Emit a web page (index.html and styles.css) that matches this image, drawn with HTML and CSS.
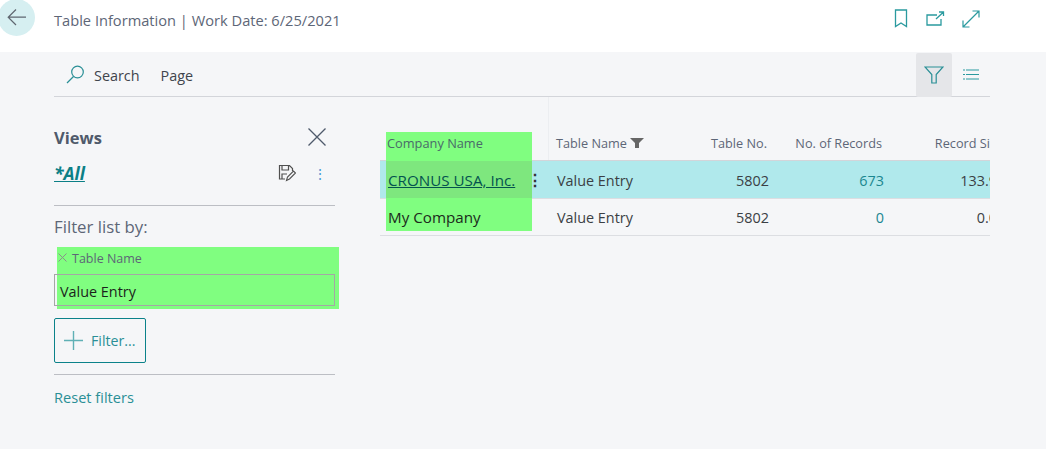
FILE: index.html
```html
<!DOCTYPE html>
<html lang="en">
<head>
<meta charset="utf-8">
<title>Table Information</title>
<link rel="stylesheet" href="styles.css">
</head>
<body>
<header class="topbar">
  <button class="back" aria-label="Back">
    <svg width="20" height="20" viewBox="0 0 20 20"><path d="M9 1.500 1.200 9.200 9 17M1.200 9.200H19" fill="none" stroke="#5f6770" stroke-width="1.200"/></svg>
  </button>
  <div class="title">Table Information | Work Date: 6/25/2021</div>
  <div class="top-icons">
    <svg width="14" height="19" viewBox="0 0 14 19"><path d="M1.500 1h11v16.500l-5.500-3.500-5.500 3.500z" fill="none" stroke="#2a9a9f" stroke-width="1.300"/></svg>
    <svg width="20" height="15" viewBox="0 0 20 15"><path d="M12 4H2v10h14V8M11 8l7-6.500M14 1h4.500v4" fill="none" stroke="#2a9a9f" stroke-width="1.300"/></svg>
    <svg width="18" height="18" viewBox="0 0 18 18"><path d="M1 17 17 1M10.500 1H17v6.500M1 10.500V17h6.500" fill="none" stroke="#2a9a9f" stroke-width="1.200"/></svg>
  </div>
</header>
<main class="page">
  <div class="toolbar">
    <svg class="search-icon" width="19" height="19" viewBox="0 0 19 19"><circle cx="11.500" cy="7" r="5.800" fill="none" stroke="#2a8f96" stroke-width="1.200"/><path d="M7.500 11.500 1 18" stroke="#2a8f96" stroke-width="1.300"/></svg>
    <span class="tool-label">Search</span>
    <span class="tool-label page-label">Page</span>
    <div class="tool-right">
      <span class="filter-toggle">
        <svg width="20" height="18" viewBox="0 0 20 18"><path d="M1 1h18l-6.800 7.500V17H7.800V8.500z" fill="none" stroke="#2a8f96" stroke-width="1.200"/></svg>
      </span>
      <svg class="list-icon" width="16" height="11" viewBox="0 0 16 11"><path d="M0 1h2M3 1h13M0 5.500h2M3 5.500h13M0 10h2M3 10h13" stroke="#2a9a9f" stroke-width="1.200"/></svg>
    </div>
  </div>
  <div class="content">
    <aside class="panel">
      <div class="views-row">
        <span class="views">Views</span>
        <svg width="20" height="20" viewBox="0 0 20 20"><path d="M1.500 1.500 18.500 18.500M18.500 1.500 1.500 18.500" stroke="#4f5a6b" stroke-width="1.300"/></svg>
      </div>
      <div class="all-row">
        <a class="all">*All</a>
        <svg class="save-icon" width="18" height="18" viewBox="0 0 18 18"><path d="M7 15H1.500V1.500h10l3 3V7M4 1.500V6h6.500V1.500M4 15v-5h5" fill="none" stroke="#505050" stroke-width="1.200"/><path d="M8.500 16.500 9.500 13l6-6 2 2-6 6z" fill="none" stroke="#505050" stroke-width="1.100"/></svg>
        <span class="dots">⋮</span>
      </div>
      <div class="filter-by">Filter list by:</div>
      <div class="filter-field">
        <div class="mark mark-filter"></div>
        <div class="field-label">
          <svg class="field-x" width="9" height="9" viewBox="0 0 9 9"><path d="M.5.500l8 8M8.500.500l-8 8" stroke="#8a8f8a" stroke-width="1"/></svg>
          <span>Table Name</span>
        </div>
        <div class="field-input">Value Entry</div>
      </div>
      <button class="add-filter">
        <svg width="19" height="19" viewBox="0 0 19 19"><path d="M9.500 0v19M0 9.500h19" stroke="#5fb0b5" stroke-width="1.400"/></svg>
        <span>Filter...</span>
      </button>
      <a class="reset">Reset filters</a>
    </aside>
    <section class="grid-wrap">
      <div class="grid">
        <div class="mark mark-column"><div class="mark-band"></div></div>
        <div class="row head">
          <div class="cell first">Company Name</div>
          <div class="cell name-head">Table Name
            <svg width="14" height="10" viewBox="0 0 14 10"><path d="M0 0h14L9 5v5H5V5z" fill="#666"/></svg>
          </div>
          <div class="cell num">Table No.</div>
          <div class="cell num">No. of Records</div>
          <div class="cell num">Record Size</div>
        </div>
        <div class="row selected">
          <div class="cell first"><a class="company-link">CRONUS USA, Inc.</a><span class="row-menu">⋮</span></div>
          <div class="cell">Value Entry</div>
          <div class="cell num">5802</div>
          <div class="cell num link">673</div>
          <div class="cell num size">133.9</div>
        </div>
        <div class="row">
          <div class="cell first">My Company</div>
          <div class="cell">Value Entry</div>
          <div class="cell num">5802</div>
          <div class="cell num link">0</div>
          <div class="cell num size">0.0</div>
        </div>
      </div>
    </section>
  </div>
</main>
</body>
</html>
```
FILE: styles.css
```css
* { box-sizing: border-box; }
html, body { margin: 0; height: 100%; }
body {
  width: 1046px;
  height: 449px;
  overflow: hidden;
  background: #f5f6f8;
  font-family: "Open Sans", "Noto Sans", sans-serif;
  font-size: 14.400px;
  color: #3b3f44;
}
.topbar {
  height: 52px;
  background: #fff;
  display: flex;
  align-items: center;
  position: relative;
}
.back {
  position: absolute;
  left: -2px;
  top: -1px;
  width: 37px;
  height: 37px;
  border: 0;
  border-radius: 50%;
  background: #d6eff1;
  padding: 0;
  display: flex;
  align-items: center;
  justify-content: center;
}
.title {
  margin: -13px 0 0 54px;
  color: #5d6677;
  font-size: 14.650px;
}
.top-icons {
  margin-left: auto;
  margin-right: 66px;
  margin-top: -15px;
  display: flex;
  align-items: center;
  gap: 17px;
}
.page { padding: 0 56px 0 54px; }
.toolbar {
  height: 45px;
  border-bottom: 1px solid #d3d5da;
  display: flex;
  align-items: center;
  padding-left: 12px;
}
.search-icon { margin-right: 9px; }
.tool-label { color: #3f444c; font-size: 14.400px; position: relative; top: 1px; }
.page-label { margin-left: 21px; }
.tool-right { margin-left: auto; display: flex; align-items: center; align-self: stretch; }
.filter-toggle {
  width: 36px;
  height: 44px;
  margin-top: 1px;
  background: #e5e6e9;
  border-radius: 2px;
  display: flex;
  align-items: center;
  justify-content: center;
}
.list-icon { margin: 1px 11px 0 11px; }
.content { display: flex; align-items: flex-start; }
.panel { width: 281px; flex: none; padding-top: 29px; }
.views-row { display: flex; justify-content: space-between; align-items: center; height: 22px; padding-right: 8px; margin-bottom: 1px; }
.views { font-weight: 700; font-size: 16.500px; color: #4f5a6b; }
.all-row {
  display: flex;
  align-items: center;
  height: 57px;
  padding-top: 6px;
  padding-bottom: 14px;
  border-bottom: 1px solid #bcbec4;
}
.all { font-weight: 700; font-style: italic; font-size: 17.500px; color: #0b7f86; text-decoration: underline; }
.save-icon { margin-left: auto; }
.dots { color: #4a9ad4; font-size: 14px; width: 14px; margin: 0 8px 0 17px; text-align: center; }
.filter-by { font-size: 16.800px; color: #5d6677; margin-top: 9px; height: 30px; }
.filter-field { position: relative; margin-top: -1px; }
.field-label { height: 30px; padding: 0 0 2px 4px; font-size: 12.500px; color: #5d6677; display: flex; align-items: center; position: relative; }
.field-x { margin-right: 5px; margin-top: -1px; }
.field-input {
  height: 32px;
  border: 1px solid #a5a7a5;
  padding-left: 5px;
  line-height: 33px;
  font-size: 14.400px;
  color: #1c1f1c;
  position: relative;
}
.mark { position: absolute; background: #80fe80; pointer-events: none; }
.mark-filter { left: 3px; top: 3px; width: 282px; height: 62px; }
.add-filter {
  margin-top: 12px;
  width: 92px;
  height: 45px;
  background: transparent;
  border: 1px solid #0b828a;
  border-radius: 2px;
  display: flex;
  align-items: center;
  gap: 8px;
  padding: 0 0 0 9px;
  font: inherit;
  color: #2a8f96;
  font-size: 14.200px;
}
.reset {
  display: block;
  margin-top: 11px;
  padding-top: 12px;
  border-top: 1px solid #bcbec4;
  color: #2a8f96;
  font-size: 14.600px;
}
.grid-wrap { margin-left: 45px; width: 610px; overflow: hidden; padding-top: 35px; position: relative; }
.grid-wrap::before {
  content: "";
  position: absolute;
  left: 168px;
  top: 0;
  width: 1px;
  height: 63px;
  background: #eceef1;
}
.grid { width: 640px; position: relative; }
.row {
  display: grid;
  grid-template-columns: 168px 130px 92px 115px 121px;
  height: 37px;
  border-bottom: 1px solid #dcdee2;
  align-items: center;
}
.row.head {
  height: 29px;
  border-bottom-color: #d3d5da;
  font-size: 12.700px;
  color: #5d6677;
  align-items: flex-start;
}
.row.selected { background: #b0e9ec; height: 38px; }
.cell { padding-left: 9px; padding-top: 1px; white-space: nowrap; position: relative; }
.head .cell { padding-top: 2px; padding-left: 8px; }
.row .first { padding-left: 8px; padding-top: 0; font-size: 15.200px; color: #1c2a1c; }
.head .first { padding-left: 7px; padding-top: 2px; font-size: 12.800px; color: #4a6a6a; }
.name-head { display: flex; align-items: center; gap: 3px; }
.num { text-align: right; padding-right: 1px; }
.head .num { padding-right: 3px; }
.size { padding-right: 9px; }
.link { color: #1b8790; }
.company-link { color: #04534f; text-decoration: underline; }
.row-menu { position: absolute; left: 147px; top: -1px; font-size: 16px; font-weight: 700; color: #333; }
.mark-column { left: 6px; top: 0; width: 146px; height: 99px; }
.mark-band { position: absolute; left: 0; right: 0; top: 29px; height: 37px; background: #7ee77e; }
```
